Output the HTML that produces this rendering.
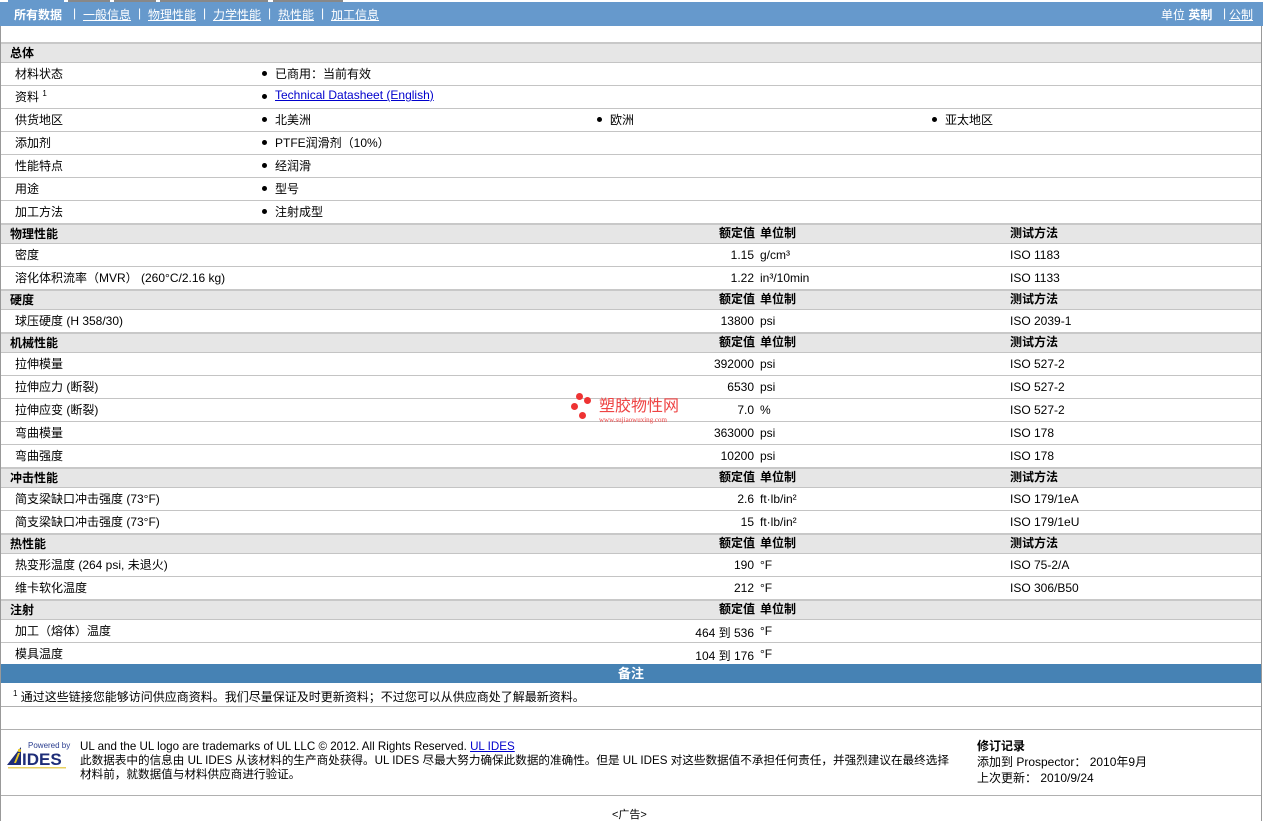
<!DOCTYPE html>
<html><head><meta charset="utf-8"><style>
*{margin:0;padding:0;box-sizing:border-box}
body{width:1263px;height:821px;background:#fff;font-family:"Liberation Sans","Noto Sans CJK SC",sans-serif;font-size:12px;color:#000;position:relative;overflow:hidden}
.a{position:absolute;white-space:nowrap}
#nav{position:absolute;left:0;top:2px;width:1263px;height:24px;background:#6699cc;color:#fff;font-size:12px}
#nav span{position:absolute;top:4px}
#nav u{text-decoration:underline}
.frame{position:absolute;left:0;top:26px;width:1px;height:795px;background:#999}
.frame2{position:absolute;left:1261px;top:26px;width:1px;height:795px;background:#999}
.row{position:absolute;left:1px;width:1260px;border-top:1px solid #c4c4c4}
.h{background:#e6e6e6;font-weight:bold;border-top:2px solid #c8c8c8}
.row span{position:absolute}
.bul::before{content:"";position:absolute;left:-13px;top:6px;width:5px;height:5px;border-radius:50%;background:#000}
.r{text-align:right;width:200px}
</style></head><body>
<div class="a" style="left:8px;top:0;width:56px;height:2px;background:#6699cc"></div>
<div class="a" style="left:68px;top:0;width:42px;height:2px;background:#888"></div>
<div class="a" style="left:114px;top:0;width:42px;height:2px;background:#888"></div>
<div class="a" style="left:160px;top:0;width:108px;height:2px;background:#888"></div>
<div class="a" style="left:273px;top:0;width:70px;height:2px;background:#888"></div>
<div id="nav">
<span style="left:14px;font-weight:bold">所有数据</span>
<span style="left:73px">|</span><span style="left:83px"><u>一般信息</u></span>
<span style="left:138px">|</span><span style="left:148px"><u>物理性能</u></span>
<span style="left:203px">|</span><span style="left:213px"><u>力学性能</u></span>
<span style="left:268px">|</span><span style="left:278px"><u>热性能</u></span>
<span style="left:321px">|</span><span style="left:331px"><u>加工信息</u></span>
<span style="left:1161px">单位 <b>英制</b></span>
<span style="left:1223px">|</span><span style="left:1229px"><u>公制</u></span>
</div>
<div class="frame"></div><div class="frame2"></div>
<div id="rows"></div>
<script>
var R=[
['h',42,20,'总体'],
['d',62,23,'材料状态',[[275,'已商用：当前有效']]],
['d',85,23,'资料 <sup style="font-size:8px;vertical-align:5px">1</sup>',[[275,'<a style="color:#00c;text-decoration:underline">Technical Datasheet (English)</a>']]],
['d',108,23,'供货地区',[[275,'北美洲'],[610,'欧洲'],[945,'亚太地区']]],
['d',131,23,'添加剂',[[275,'PTFE润滑剂（10%）']]],
['d',154,23,'性能特点',[[275,'经润滑']]],
['d',177,23,'用途',[[275,'型号']]],
['d',200,23,'加工方法',[[275,'注射成型']]],
['H',223,20,'物理性能',1],
['v',243,23,'密度','1.15','g/cm³','ISO 1183'],
['v',266,23,'溶化体积流率（MVR） (260°C/2.16 kg)','1.22','in³/10min','ISO 1133'],
['H',289,20,'硬度',1],
['v',309,23,'球压硬度 (H 358/30)','13800','psi','ISO 2039-1'],
['H',332,20,'机械性能',1],
['v',352,23,'拉伸模量','392000','psi','ISO 527-2'],
['v',375,23,'拉伸应力 (断裂)','6530','psi','ISO 527-2'],
['v',398,23,'拉伸应变 (断裂)','7.0','%','ISO 527-2'],
['v',421,23,'弯曲模量','363000','psi','ISO 178'],
['v',444,23,'弯曲强度','10200','psi','ISO 178'],
['H',467,20,'冲击性能',1],
['v',487,23,'简支梁缺口冲击强度 (73°F)','2.6','ft·lb/in²','ISO 179/1eA'],
['v',510,23,'简支梁缺口冲击强度 (73°F)','15','ft·lb/in²','ISO 179/1eU'],
['H',533,20,'热性能',1],
['v',553,23,'热变形温度 (264 psi, 未退火)','190','°F','ISO 75-2/A'],
['v',576,23,'维卡软化温度','212','°F','ISO 306/B50'],
['H',599,20,'注射',0],
['v',619,23,'加工（熔体）温度','464 到  536','°F',''],
['v',642,22,'模具温度','104 到  176','°F','']
];
var h='';
R.forEach(function(r){
 var t=r[0],y=r[1],ht=r[2];
 if(t=='h'||t=='H'){
  h+='<div class="row h" style="top:'+y+'px;height:'+ht+'px"><span style="left:9px;top:0px">'+r[3]+'</span>';
  if(t=='H'){h+='<span class="r" style="left:554px;top:-1px">额定值</span><span style="left:759px;top:-1px">单位制</span>';if(r[4])h+='<span style="left:1009px;top:-1px">测试方法</span>';}
  h+='</div>';
 }else if(t=='d'){
  h+='<div class="row" style="top:'+y+'px;height:'+ht+'px"><span style="left:14px;top:2px">'+r[3]+'</span>';
  r[4].forEach(function(c){h+='<span class="bul" style="left:'+(c[0]-1)+'px;top:2px">'+c[1]+'</span>'});
  h+='</div>';
 }else{
  h+='<div class="row" style="top:'+y+'px;height:'+ht+'px"><span style="left:14px;top:2px">'+r[3]+'</span><span class="r" style="left:553px;top:4px">'+r[4]+'</span><span style="left:759px;top:4px">'+r[5]+'</span><span style="left:1009px;top:4px">'+r[6]+'</span></div>';
 }
});
document.getElementById('rows').innerHTML=h;
</script>
<div class="a" style="left:1px;top:664px;width:1260px;height:19px;background:#4682b4;color:#fff;font-weight:bold;font-size:13px;text-align:center;line-height:19px">备注</div>
<div class="a" style="left:13px;top:688px;font-size:12px"><sup style="font-size:8px">1</sup> 通过这些链接您能够访问供应商资料。我们尽量保证及时更新资料；不过您可以从供应商处了解最新资料。</div>
<div class="a" style="left:1px;top:706px;width:1260px;height:1px;background:#b0b0b0"></div>
<div class="a" style="left:1px;top:729px;width:1260px;height:1px;background:#b0b0b0"></div>
<div class="a" style="left:1px;top:795px;width:1260px;height:1px;background:#b0b0b0"></div>
<svg class="a" style="left:6px;top:739px" width="66" height="30" viewBox="0 0 66 30">
<text x="22" y="9" font-family="Liberation Sans" font-size="8" fill="#2a3d8f">Powered by</text>
<polygon points="1,26 15,8 15,26" fill="#1e2d78"/>
<polygon points="8,24 12,14 14,14 10,24" fill="#e8c820"/>
<circle cx="13.5" cy="11.5" r="1.6" fill="#e8c820"/>
<text x="16" y="26" font-family="Liberation Sans" font-weight="bold" font-size="17" fill="#1e2d78">IDES</text>
<rect x="2" y="28" width="58" height="1.5" fill="#e8d060"/>
</svg>
<div class="a" style="left:80px;top:740px;line-height:14px;font-size:11.6px">UL and the UL logo are trademarks of UL LLC © 2012. All Rights Reserved. <a style="color:#00c;text-decoration:underline">UL IDES</a><br>此数据表中的信息由 UL IDES 从该材料的生产商处获得。UL IDES 尽最大努力确保此数据的准确性。但是 UL IDES 对这些数据值不承担任何责任，并强烈建议在最终选择<br>材料前，就数据值与材料供应商进行验证。</div>
<div class="a" style="left:977px;top:738px;line-height:16px;font-size:12px"><b>修订记录</b><br>添加到 Prospector： 2010年9月<br>上次更新： 2010/9/24</div>
<div class="a" style="left:612px;top:806px;font-size:11px">&lt;广告&gt;</div>
<div class="a" style="left:570px;top:393px;width:12px;height:12px">
<div class="a" style="left:6px;top:0;width:7px;height:7px;border-radius:50%;background:#e33"></div>
<div class="a" style="left:14px;top:4px;width:7px;height:7px;border-radius:50%;background:#e33"></div>
<div class="a" style="left:1px;top:10px;width:7px;height:7px;border-radius:50%;background:#e33"></div>
<div class="a" style="left:9px;top:19px;width:7px;height:7px;border-radius:50%;background:#e33"></div>
</div>
<div class="a" style="left:599px;top:398px;color:#e44;font-size:16px;line-height:18px">塑胶物性网</div>
<div class="a" style="left:599px;top:416px;color:#e44;font-size:7px;font-family:'Liberation Serif',serif">www.sujiaowuxing.com</div>
</body></html>
